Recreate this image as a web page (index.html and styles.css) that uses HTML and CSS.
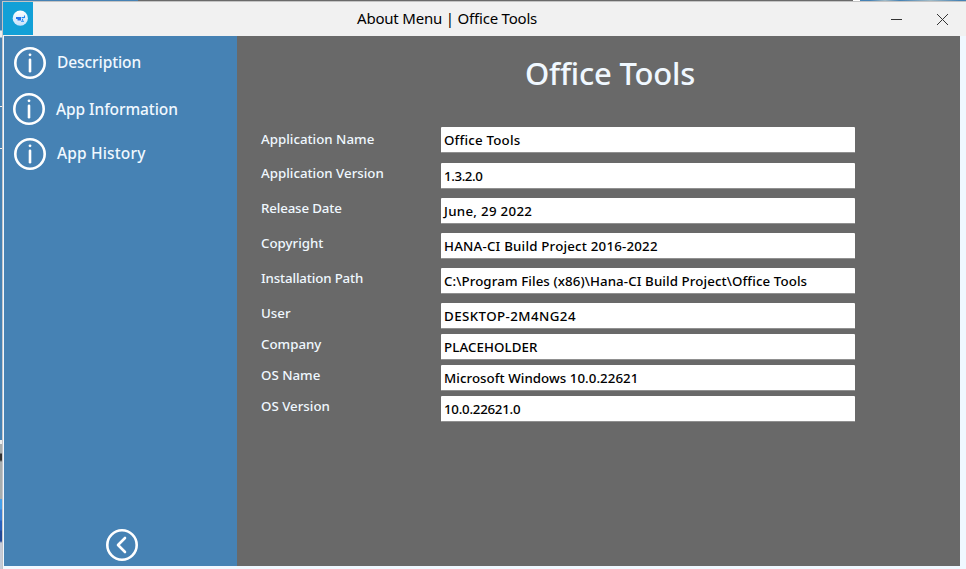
FILE: index.html
```
<!DOCTYPE html>
<html lang="en">
<head>
<meta charset="utf-8">
<title>About Menu | Office Tools</title>
<link rel="stylesheet" href="styles.css">
</head>
<body>
<div class="desktop">
  <div class="backdrop-top"></div>
  <div class="backdrop-left"></div>
  <div class="window">
    <header class="titlebar">
      <div class="app-icon">
        <svg width="30" height="33" viewBox="0 0 30 33"><defs><linearGradient id="g" x2="0" y2="1"><stop stop-color="#fff"/><stop offset="1" stop-color="#c5e2fb"/></linearGradient></defs><circle cx="17.3" cy="16.2" r="7.6" fill="url(#g)"/><path d="M13 15h5v3.6h-3.5V17H13z" fill="#2474ee"/><path d="M18.6 15.6h2.6M19.5 17v1.6M18 19.3h3M21.5 16v-2.4" stroke="#218cf5" stroke-width="1.1" fill="none"/></svg>
      </div>
      <div class="window-title">About Menu | Office Tools</div>
      <svg class="controls" width="80" height="33" viewBox="0 0 80 33"><path d="M8 17.5h11" stroke="#333"/><path d="M54 12l11 11M65 12l-11 11" stroke="#333" stroke-width="1"/></svg>
    </header>
    <div class="body">
      <nav class="sidebar">
        <a class="item"><svg class="ring" viewBox="0 0 32 32"><circle cx="16" cy="16" r="14.7"/><path d="M16 12.7v11.6"/><circle class="dot" cx="16" cy="7.8" r="1.4"/></svg><span class="lift">Description</span></a>
        <a class="item second"><svg class="ring" viewBox="0 0 32 32"><circle cx="16" cy="16" r="14.7"/><path d="M16 12.7v11.6"/><circle class="dot" cx="16" cy="7.8" r="1.4"/></svg><span>App Information</span></a>
        <a class="item third"><svg class="ring" viewBox="0 0 32 32"><circle cx="16" cy="16" r="14.7"/><path d="M16 12.7v11.6"/><circle class="dot" cx="16" cy="7.8" r="1.4"/></svg><span class="lift wide">App History</span></a>
        <a class="back"><svg class="ring" viewBox="0 0 32 32"><circle cx="16" cy="16" r="14.7"/><path d="M19 9l-7 7 7 7"/></svg></a>
      </nav>
      <main class="content">
        <h1>Office Tools</h1>
        <div class="fields">
          <label>Application Name</label><div class="value">Office Tools</div>
          <label>Application Version</label><div class="value version">1.3.2.0</div>
          <label class="narrow">Release Date</label><div class="value date">June, 29 2022</div>
          <label>Copyright</label><div class="value">HANA-CI Build Project 2016-2022</div>
          <label class="narrow">Installation Path</label><div class="value path">C:\Program Files (x86)\Hana-CI Build Project\Office Tools</div>
          <label>User</label><div class="value user">DESKTOP-2M4NG24</div>
          <label>Company</label><div class="value company">PLACEHOLDER</div>
          <label>OS Name</label><div class="value os-name">Microsoft Windows 10.0.22621</div>
          <label>OS Version</label><div class="value os-version">10.0.22621.0</div>
        </div>
      </main>
    </div>
  </div>
</div>
</body>
</html>
```
FILE: styles.css
```
* { box-sizing: border-box; }
body { margin: 0; overflow: hidden; font-family: "Noto Sans", "Open Sans", sans-serif; }
.desktop { width: 966px; height: 569px; display: grid; grid-template: 1px 568px / 2px 964px; }
.backdrop-top { grid-column: 1 / 3; background: linear-gradient(90deg, #4682b4 138px, #6a6a6a 138px 853px, #fff 853px 860px, #4682b4 860px 870px, #9fb9c6 885px, #4682b4 900px, #9fb9c6 930px, #4682b4 960px); }
.backdrop-left { background: linear-gradient(#4682b4 29px, #eee 30px 36px, #4682b4 37px 105px, #eee 105px 106px, #4682b4 106px 147px, #eee 147px 148px, #4682b4 148px 439px, #eee 439px 443px, #a6adaf 443px 452px, #333 453px 459px, #a6adaf 461px 498px, #46a0ea 498px 508px, #3d80d4 509px 519px, #2b62bd 520px 529px, #244a98 530px 540px, #c4cbd8 542px); }
.window { display: flex; flex-direction: column; background: #f0f8ff; border-left: 1px solid #c4c4c8; border-top: 1px solid #c4c4c4; }
.titlebar { height: 34px; flex: none; display: flex; background: #f1f1f1; }
.app-icon { width: 30px; height: 33px; background: #12a0d7; }
.app-icon svg, .controls { display: block; }
.window-title { flex: 1; padding-left: 324px; line-height: 33px; font-size: 15px; letter-spacing: -0.2px; color: #000; white-space: nowrap; }
.controls { margin-right: 3px; flex: none; }
.body { display: flex; height: 530px; margin: 0 6px 0 1px; }
.sidebar { width: 233px; background: #4682b4; display: flex; flex-direction: column; padding: 11px 0 5px 10px; }
.item { display: flex; align-items: center; gap: 11px; height: 32px; color: #f0f8ff; font-size: 15.5px; letter-spacing: -0.08px; font-weight: 500; white-space: nowrap; }
.second { margin: 14px 0 13px -1px; }
.lift { padding-bottom: 2px; }
.wide { letter-spacing: 0.15px; }
.ring { width: 32px; height: 32px; fill: none; stroke: #fff; stroke-width: 2.6; stroke-linecap: round; stroke-linejoin: round; }
.ring .dot { fill: #fff; stroke: none; }
.back { margin: auto 0 0 92px; height: 32px; }
.content { flex: 1; background: #696969; padding: 14px 0 0 24px; color: #f0f8ff; }
h1 { margin: 0 0 0 264px; height: 77px; font-size: 31px; letter-spacing: -0.2px; line-height: 47px; font-weight: 500; white-space: nowrap; }
.fields { display: grid; grid-template-columns: 180px 414px; grid-template-rows: 36px repeat(4, 35px) repeat(4, 31px); align-items: start; font-size: 13.3px; font-weight: 500; white-space: nowrap; }
label { line-height: 24px; }
label:not(:first-child) { margin-top: -2px; }
.narrow { letter-spacing: -0.15px; }
.value { height: 26px; padding-left: 3px; line-height: 26px; letter-spacing: 0.2px; color: #000; background: #fff; border-bottom: 1px solid #909090; border-radius: 1px; }
.version { letter-spacing: -0.4px; }
.date { letter-spacing: 0.3px; }
.path, .company { letter-spacing: 0.1px; }
.user { letter-spacing: 0.43px; }
.os-name { letter-spacing: 0.05px; }
.os-version { letter-spacing: -0.25px; }
```
